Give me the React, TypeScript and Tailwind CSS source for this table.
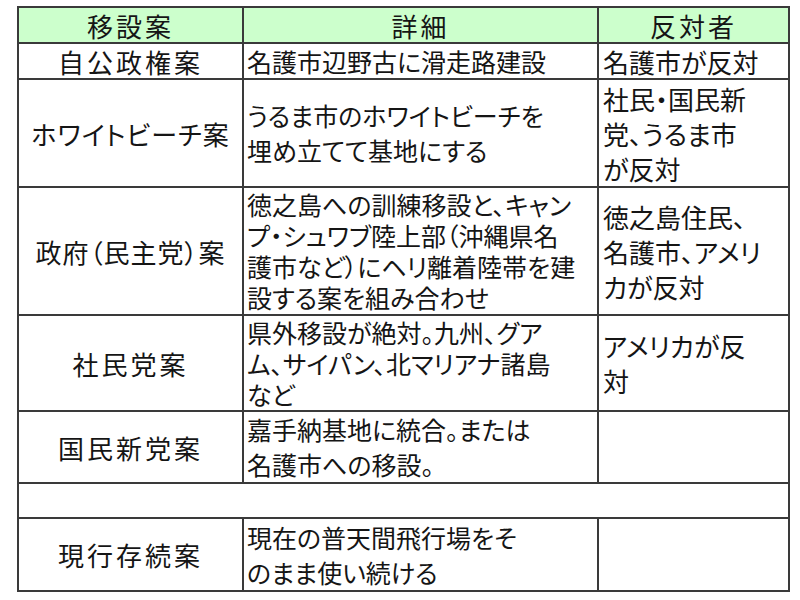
import React from 'react';

type Row = {
  plan: string;
  detail: string[];
  against: string[];
  wide?: boolean;
  tight?: boolean;
};

// 移設案の比較表
const rows: Row[] = [
  { plan: '自公政権案', detail: ['名護市辺野古に滑走路建設'], against: ['名護市が反対'], wide: true },
  {
    plan: 'ホワイトビーチ案',
    detail: ['うるま市のホワイトビーチを', '埋め立てて基地にする'],
    against: ['社民・国民新', '党、うるま市', 'が反対'],
  },
  {
    plan: '政府（民主党）案',
    detail: ['徳之島への訓練移設と、キャン', 'プ・シュワブ陸上部（沖縄県名', '護市など）にヘリ離着陸帯を建', '設する案を組み合わせ'],
    against: ['徳之島住民、', '名護市、アメリ', 'カが反対'],
    tight: true,
  },
  {
    plan: '社民党案',
    detail: ['県外移設が絶対。九州、グア', 'ム、サイパン、北マリアナ諸島', 'など'],
    against: ['アメリカが反', '対'],
    wide: true,
    tight: true,
  },
  { plan: '国民新党案', detail: ['嘉手納基地に統合。または', '名護市への移設。'], against: [], wide: true },
];

const last: Row = { plan: '現行存続案', detail: ['現在の普天間飛行場をそ', 'のまま使い続ける'], against: [], wide: true };

const Lines = ({ lines, tight }: { lines: string[]; tight?: boolean }) => (
  <div className={tight ? 'leading-[31px]' : 'leading-[35px]'}>
    {lines.map((l, i) => (
      <div key={i} className="whitespace-nowrap">{l}</div>
    ))}
  </div>
);

const BodyRow = ({ row }: { row: Row }) => (
  <>
    <div className={`bg-white flex items-center justify-center text-[26px] ${row.wide ? 'tracking-[3px]' : 'tracking-[1px]'}`}>
      {row.plan}
    </div>
    <div className="bg-white flex items-center pl-[3px] text-[25px]">
      <Lines lines={row.detail} tight={row.tight} />
    </div>
    <div className="bg-white flex items-center pl-[4px] text-[26px]">
      <Lines lines={row.against} />
    </div>
  </>
);

export default function App() {
  return (
    <div className="w-[800px] h-[600px] bg-white pt-[6px] pl-[17px] text-[#151515] font-['Noto_Sans_CJK_JP',sans-serif] [font-feature-settings:'palt']">
      <div className="w-[773px] grid grid-cols-[223px_353px_189px] grid-rows-[34px_34px_106px_126px_94px_70px_33px_71px] gap-[2px] p-[2px] bg-[#3a3a3a]">
        <div className="bg-[#ccffcc] flex items-center justify-center text-[26px] tracking-[3px]">移設案</div>
        <div className="bg-[#ccffcc] flex items-center justify-center text-[26px] tracking-[3px]">詳細</div>
        <div className="bg-[#ccffcc] flex items-center justify-center text-[26px] tracking-[3px]">反対者</div>
        {rows.map((r, i) => (
          <BodyRow key={i} row={r} />
        ))}
        <div className="bg-white col-span-3" />
        <BodyRow row={last} />
      </div>
    </div>
  );
}
